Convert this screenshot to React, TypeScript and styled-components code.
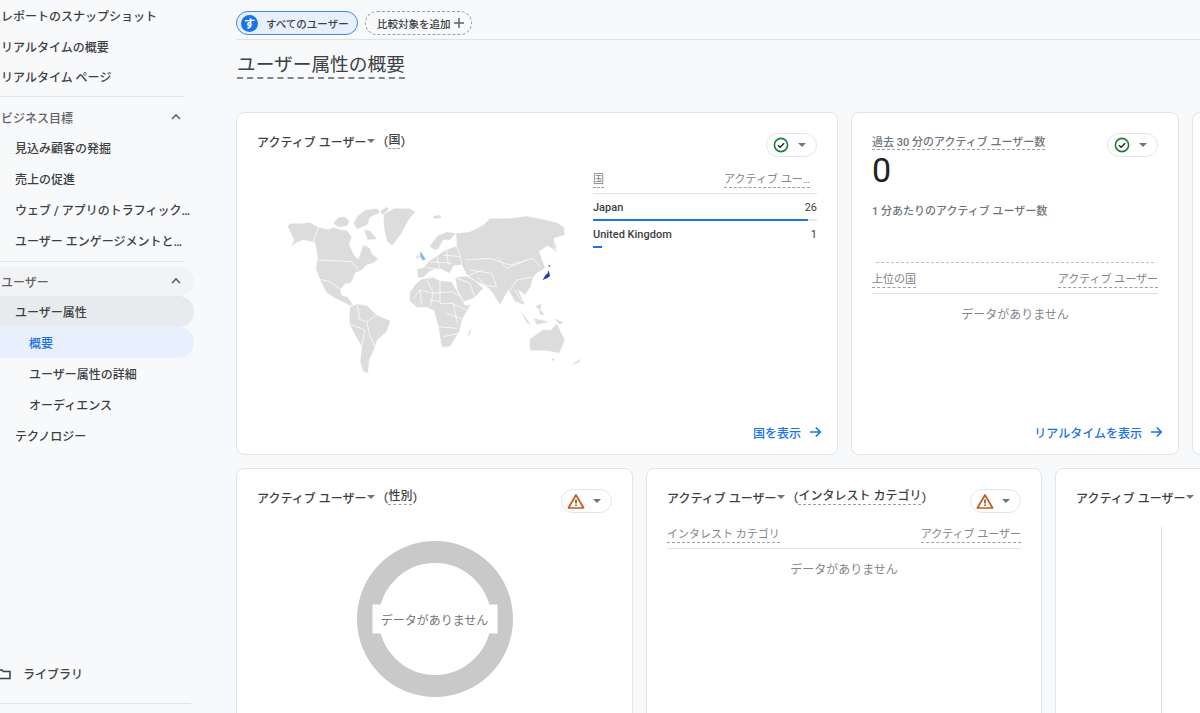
import React from "react";
import styled, { createGlobalStyle } from "styled-components";

const Global = createGlobalStyle`
  html, body { margin: 0; padding: 0; background: #f8f9fa; }
  body { font-family: Roboto, "Noto Sans CJK JP", sans-serif; color: #3c4043; overflow: hidden; }
  * { box-sizing: border-box; }
`;

const Page = styled.div`
  display: flex;
  width: 1200px;
  height: 713px;
  overflow: hidden;
  background: #f8f9fa;
`;

const Sidebar = styled.nav`
  flex: 0 0 194px;
  width: 194px;
  min-width: 0;
  display: flex;
  flex-direction: column;
  height: 713px;
  margin-right: 42px;
  overflow: hidden;
  font-size: 12px;
  font-weight: 500;
`;

const NavRow = styled.div<{ $indent?: number; $bg?: string; $color?: string }>`
  display: flex;
  align-items: center;
  justify-content: space-between;
  flex: 0 0 auto;
  height: 30.8px;
  min-width: 0;
  padding: 0 4px 0 ${(p) => p.$indent ?? 1}px;
  border-radius: 0 16px 16px 0;
  background: ${(p) => p.$bg ?? "transparent"};
  color: ${(p) => p.$color ?? "#3c4043"};
  white-space: nowrap;
`;

const ChevronBox = styled.span`
  display: flex;
  margin-right: 8px;
`;

const NavDivider = styled.div<{ $w: number; $top: number; $bottom: number }>`
  flex: 0 0 1px;
  width: ${(p) => p.$w}px;
  margin: ${(p) => p.$top}px 0 ${(p) => p.$bottom}px;
  background: #e3e4e6;
`;

const LibraryRow = styled.div`
  display: flex;
  align-items: center;
  gap: 12px;
  margin-top: auto;
  height: 31px;
  margin-left: -3px;
`;

const Main = styled.main`
  flex: 1;
  min-width: 0;
  height: 713px;
  overflow: hidden;
`;

const ChipBar = styled.div`
  display: flex;
  align-items: flex-start;
  gap: 7px;
  height: 40px;
  padding-top: 11px;
  border-bottom: 1px solid #dfe1e5;
`;

const SegmentChip = styled.div`
  display: flex;
  align-items: center;
  width: 122px;
  height: 24px;
  padding-left: 4px;
  border: 1px solid #4285f4;
  border-radius: 12px;
  background: #e8f0fe;
  font-size: 10.5px;
  font-weight: 500;
`;

const Avatar = styled.span`
  display: flex;
  align-items: center;
  justify-content: center;
  width: 17px;
  height: 17px;
  margin-right: 8px;
  border-radius: 50%;
  background: #1a73e8;
  color: #fff;
  font-size: 11px;
  font-weight: 700;
`;

const AddChip = styled.div`
  display: flex;
  align-items: center;
  justify-content: space-between;
  width: 107px;
  height: 24px;
  padding: 0 6px 0 11px;
  border: 1px dashed #9aa0a6;
  border-radius: 12px;
  font-size: 10.5px;
  font-weight: 500;
`;

const PageTitle = styled.h1`
  display: inline-block;
  margin: 14px 0 33px 1px;
  height: 25px;
  font-size: 18.7px;
  line-height: 23px;
  font-weight: 400;
  color: #3c4043;
  border-bottom: 2px dashed #80868b;
  white-space: nowrap;
`;

const CardRow = styled.div<{ $h: number }>`
  display: flex;
  gap: 13px;
  height: ${(p) => p.$h}px;
  margin-bottom: 13px;
`;

const Card = styled.section<{ $w: number }>`
  position: relative;
  flex: 0 0 ${(p) => p.$w}px;
  display: flex;
  flex-direction: column;
  height: 100%;
  padding: 20px 20px 13px;
  border: 1px solid #e2e4e7;
  border-radius: 8px;
  background: #fff;
`;

const CardHead = styled.div`
  display: flex;
  justify-content: space-between;
  align-items: flex-start;
  height: 24px;
`;

const CardTitle = styled.div`
  display: flex;
  align-items: center;
  height: 18px;
  margin-top: -1px;
  font-size: 12px;
  font-weight: 500;
  color: #3c4043;
  white-space: nowrap;
`;

const Dotted = styled.span`
  border-bottom: 1px dashed #9aa0a6;
  line-height: 15px;
`;

const ClippedHeader = styled(Dotted)`
  margin-right: 7px;
`;

const Caret = styled.span`
  display: inline-block;
  width: 0;
  height: 0;
  margin: 0 1px;
  border-left: 4px solid transparent;
  border-right: 4px solid transparent;
  border-top: 4px solid #70757a;
`;

const StatusPill = styled.div`
  display: flex;
  align-items: center;
  justify-content: space-between;
  flex: 0 0 auto;
  width: 51px;
  height: 24px;
  padding: 0 9px 0 5px;
  border: 1px solid #e3e5e8;
  border-radius: 12px;
  background: #fff;
`;

const CardBody = styled.div`
  display: flex;
  flex: 1;
`;

const MapBox = styled.div`
  flex: 0 0 320px;
  height: 200px;
  margin: 33px 3px 0 13px;
`;

const Table = styled.div<{ $top?: number }>`
  flex: 1;
  min-width: 0;
  margin-top: ${(p) => p.$top ?? 15}px;
`;

const TableHead = styled.div`
  display: flex;
  justify-content: space-between;
  align-items: flex-end;
  height: 22px;
  padding-bottom: 5px;
  border-bottom: 1px solid #dfe1e5;
  font-size: 11px;
  color: #80868b;
  white-space: nowrap;
`;

const TableRow = styled.div`
  display: flex;
  justify-content: space-between;
  align-items: center;
  height: 25px;
  padding-top: 1px;
  font-family: Roboto, sans-serif;
  font-size: 11px;
  font-weight: 500;
  color: #3c4043;
`;

const RowValue = styled.span`
  font-weight: 400;
`;

const BarTrack = styled.div<{ $line?: boolean }>`
  height: 2px;
  background: ${(p) => (p.$line ? "#e8eaed" : "transparent")};
`;

const BarFill = styled.div`
  height: 2px;
  background: #1a73e8;
`;

const Empty = styled.div`
  margin-top: 12px;
  text-align: center;
  font-size: 12px;
  line-height: 18px;
  color: #80868b;
`;

const FooterLink = styled.div`
  display: flex;
  justify-content: flex-end;
  align-items: center;
  gap: 8px;
  height: 18px;
  margin: auto -5px 0 0;
  color: #1a73e8;
  font-size: 12px;
  font-weight: 500;
`;

const MetricHead = styled.div`
  margin-top: -2px;
`;

const MetricLabel = styled.span`
  color: #70757a;
  font-size: 11px;
  font-weight: 500;
  line-height: 15px;
  border-bottom: 1px dashed #9aa0a6;
  white-space: nowrap;
`;

const BigNumber = styled.div`
  height: 38px;
  margin-top: -6px;
  font-size: 34px;
  line-height: 38px;
  color: #202124;
`;

const SubLabel = styled.div`
  margin-top: 15px;
  font-size: 11px;
  font-weight: 500;
  line-height: 16px;
  color: #70757a;
`;

const SparkLine = styled.div`
  height: 1px;
  margin: 42px 4px 9px;
  border-top: 1px dashed #bdc1c6;
`;

const DonutWrap = styled.div`
  position: relative;
  width: 156px;
  height: 156px;
  margin: 28px auto 0;
  border: 22px solid #c9c9c9;
  border-radius: 50%;
`;

const DonutLabel = styled.div`
  position: absolute;
  left: 50%;
  top: 50%;
  transform: translate(-50%, -50%);
  width: 125px;
  height: 29px;
  display: flex;
  align-items: center;
  justify-content: center;
  background: #fff;
  color: #757575;
  font-size: 12px;
  white-space: nowrap;
`;

const AxisLine = styled.div`
  width: 1px;
  height: 200px;
  margin: 14px 0 0 85px;
  background: #dadce0;
`;

const Chevron = () => (
  <ChevronBox>
    <svg width="12" height="12" viewBox="0 0 12 12" fill="none" stroke="#5f6368" strokeWidth="1.6">
      <path d="M2 8l4-4 4 4" />
    </svg>
  </ChevronBox>
);

const Check = () => (
  <svg width="18" height="18" viewBox="0 0 18 18" fill="none" stroke="#188038" strokeWidth="1.6">
    <circle cx="9" cy="9" r="6.6" />
    <path d="M6 9.2l2.1 2.1 4-4.1" stroke="#202124" strokeWidth="1.3" />
  </svg>
);

const Warn = () => (
  <svg width="18" height="17" viewBox="0 0 18 17" fill="none">
    <path d="M9 2L16.6 15H1.4z" stroke="#c5591b" strokeWidth="1.7" strokeLinejoin="round" />
    <path d="M9 6.6v3.8M9 11.4v1.5" stroke="#5f3a22" strokeWidth="1.4" />
  </svg>
);

const Arrow = () => (
  <svg width="13" height="12" viewBox="0 0 13 12" fill="none" stroke="#1a73e8" strokeWidth="1.6">
    <path d="M1 6h10M6.8 1.5L11.3 6l-4.5 4.5" />
  </svg>
);

const Plus = () => (
  <svg width="12" height="12" viewBox="0 0 12 12" stroke="#5f6368" strokeWidth="1.5">
    <path d="M6 1v10M1 6h10" />
  </svg>
);

const Folder = () => (
  <svg width="14" height="12" viewBox="0 0 14 12" fill="none" stroke="#3c4043" strokeWidth="1.5">
    <path d="M1 2h4l1.4 1.5H13V10.5H1z" />
  </svg>
);

const land = [
  "52,108 62,100 100,100 118,96 146,112 175,118 190,112 210,118 232,122 245,140 238,165 255,200 265,206 280,165 300,175 305,190 325,208 312,218 290,225 275,240 255,250 248,270 240,280 225,282 212,298 215,315 232,320 250,345 240,348 225,340 195,325 172,310 165,300 150,270 137,235 143,205 135,158 100,150 80,158 62,170 72,150",
  "190,100 205,82 225,80 238,92 232,108 205,112",
  "250,100 262,78 285,60 322,55 330,68 300,82 292,105 262,118",
  "330,62 350,50 358,56 338,76",
  "282,118 300,122 322,148 292,150",
  "342,72 372,55 420,55 436,66 418,88 408,105 395,130 366,168 350,152 344,125 340,100",
  "488,78 512,74 514,84 494,88",
  "240,350 262,342 290,346 320,375 362,392 350,425 322,450 315,472 298,510 294,550 280,545 270,515 275,470 252,430 238,402 238,372",
  "420,305 435,285 452,268 490,262 510,272 545,275 570,318 585,345 602,345 578,385 568,425 540,470 515,472 505,410 492,362 470,352 440,352 418,332",
  "590,442 604,410 602,432",
  "440,238 462,232 478,212 500,198 530,178 560,168 572,200 575,225 550,228 540,250 515,240 495,238 478,245 460,262 444,264",
  "478,168 505,135 532,125 558,130 540,150 520,150 505,178 492,180",
  "558,130 600,125 640,105 660,85 720,85 770,78 830,90 862,98 882,112 885,135 852,145 862,188 845,175 832,168 808,185 826,235 800,250 790,262 782,290 765,315 745,300 765,345 735,335 715,300 690,345 665,305 640,285 615,272 590,255 575,225 572,200 560,168",
  "555,262 590,258 615,272 640,295 612,325 580,335 562,300",
  "745,355 785,405 770,398",
  "790,385 840,395 800,405",
  "805,350 825,375 810,375",
  "850,385 880,395 870,405",
  "795,350 815,340 812,360",
  "778,448 820,418 842,420 860,400 885,450 868,490 830,482 780,482",
  "842,505 855,505 850,515",
  "900,525 935,505 925,520",
  "852,150 860,170 855,185",
];

const borders = [
  "146,112 130,155",
  "143,210 195,212 245,215 265,240",
  "150,268 180,275 212,298",
  "262,385 290,395 300,440 315,470",
  "240,402 285,420 275,470",
  "262,346 270,385",
  "320,375 290,395",
  "430,325 450,300 490,310 545,305 570,318",
  "470,270 490,310 480,350",
  "510,265 510,340 550,340 562,400",
  "450,300 455,345",
  "480,330 510,335",
  "505,410 560,415",
  "520,440 565,430",
  "545,340 590,360",
  "530,370 575,385",
  "470,232 520,240",
  "500,198 510,238",
  "520,195 570,200",
  "480,215 545,220",
  "530,178 535,225",
  "585,210 660,205 720,225 790,205 810,230",
  "680,200 710,235 770,210",
  "600,240 665,250 680,290",
  "620,260 660,300",
  "720,300 740,270 785,262",
  "735,300 755,335",
  "590,258 640,240",
  "640,285 680,290",
  "555,262 600,280 615,325",
];

const WorldMap = () => (
  <svg width="320" height="200" viewBox="0 0 960 600">
    {land.map((p) => (
      <polygon key={p} points={p} fill="#dcdcdc" stroke="#fff" strokeWidth="1.5" />
    ))}
    {borders.map((p) => (
      <polyline key={p} points={p} fill="none" stroke="#fff" strokeWidth="2.2" />
    ))}
    <polygon points="450,184 456,190 468,208 458,212 450,200" fill="#8ab4f8" stroke="#fff" strokeWidth="1" />
    <polygon points="440,196 447,198 445,206 438,204" fill="#dcdcdc" />
    <polygon points="836,240 840,258 832,264 818,270 826,256 833,250" fill="#1a3fa8" />
    <polygon points="834,224 842,228 838,232" fill="#2f5fd0" />
  </svg>
);

export default function App() {
  return (
    <Page>
      <Global />
      <Sidebar>
        <NavRow>レポートのスナップショット</NavRow>
        <NavRow>リアルタイムの概要</NavRow>
        <NavRow>リアルタイム ページ</NavRow>
        <NavDivider $w={184} $top={4} $bottom={4.3} />
        <NavRow $color="#5f6368">
          <span>ビジネス目標</span>
          <Chevron />
        </NavRow>
        <NavRow $indent={15}>見込み顧客の発掘</NavRow>
        <NavRow $indent={15}>売上の促進</NavRow>
        <NavRow $indent={15}>ウェブ / アプリのトラフィック…</NavRow>
        <NavRow $indent={15}>ユーザー エンゲージメントと…</NavRow>
        <NavDivider $w={184} $top={5} $bottom={4} />
        <NavRow $color="#5f6368" $bg="#f1f3f4">
          <span>ユーザー</span>
          <Chevron />
        </NavRow>
        <NavRow $indent={15} $bg="#e8eaed">ユーザー属性</NavRow>
        <NavRow $indent={29} $bg="#e8f0fe" $color="#1a73e8">概要</NavRow>
        <NavRow $indent={29}>ユーザー属性の詳細</NavRow>
        <NavRow $indent={29}>オーディエンス</NavRow>
        <NavRow $indent={15}>テクノロジー</NavRow>
        <LibraryRow>
          <Folder />
          <span>ライブラリ</span>
        </LibraryRow>
        <NavDivider $w={191} $top={14} $bottom={9} />
      </Sidebar>
      <Main>
        <ChipBar>
          <SegmentChip>
            <Avatar>す</Avatar>
            すべてのユーザー
          </SegmentChip>
          <AddChip>
            比較対象を追加
            <Plus />
          </AddChip>
        </ChipBar>
        <PageTitle>ユーザー属性の概要</PageTitle>
        <CardRow $h={343}>
          <Card $w={602}>
            <CardHead>
              <CardTitle>
                アクティブ ユーザー<Caret />（<Dotted>国</Dotted>）
              </CardTitle>
              <StatusPill>
                <Check />
                <Caret />
              </StatusPill>
            </CardHead>
            <CardBody>
              <MapBox>
                <WorldMap />
              </MapBox>
              <Table>
                <TableHead>
                  <Dotted>国</Dotted>
                  <ClippedHeader>アクティブ ユー…</ClippedHeader>
                </TableHead>
                <TableRow>
                  <span>Japan</span>
                  <RowValue>26</RowValue>
                </TableRow>
                <BarTrack $line>
                  <BarFill style={{ width: "96%" }} />
                </BarTrack>
                <TableRow>
                  <span>United Kingdom</span>
                  <RowValue>1</RowValue>
                </TableRow>
                <BarTrack>
                  <BarFill style={{ width: "4%" }} />
                </BarTrack>
              </Table>
            </CardBody>
            <FooterLink>
              国を表示
              <Arrow />
            </FooterLink>
          </Card>
          <Card $w={328}>
            <CardHead>
              <MetricHead>
                <MetricLabel>過去 30 分のアクティブ ユーザー数</MetricLabel>
              </MetricHead>
              <StatusPill>
                <Check />
                <Caret />
              </StatusPill>
            </CardHead>
            <BigNumber>0</BigNumber>
            <SubLabel>1 分あたりのアクティブ ユーザー数</SubLabel>
            <SparkLine />
            <TableHead>
              <Dotted>上位の国</Dotted>
              <Dotted>アクティブ ユーザー</Dotted>
            </TableHead>
            <Empty>データがありません</Empty>
            <FooterLink>
              リアルタイムを表示
              <Arrow />
            </FooterLink>
          </Card>
          <Card $w={200} />
        </CardRow>
        <CardRow $h={300}>
          <Card $w={397}>
            <CardHead>
              <CardTitle>
                アクティブ ユーザー<Caret />（<Dotted>性別</Dotted>）
              </CardTitle>
              <StatusPill>
                <Warn />
                <Caret />
              </StatusPill>
            </CardHead>
            <DonutWrap>
              <DonutLabel>データがありません</DonutLabel>
            </DonutWrap>
          </Card>
          <Card $w={396}>
            <CardHead>
              <CardTitle>
                アクティブ ユーザー<Caret />（<Dotted>インタレスト カテゴリ</Dotted>）
              </CardTitle>
              <StatusPill>
                <Warn />
                <Caret />
              </StatusPill>
            </CardHead>
            <Table $top={14}>
              <TableHead>
                <Dotted>インタレスト カテゴリ</Dotted>
                <Dotted>アクティブ ユーザー</Dotted>
              </TableHead>
              <Empty>データがありません</Empty>
            </Table>
          </Card>
          <Card $w={300}>
            <CardHead>
              <CardTitle>
                アクティブ ユーザー<Caret />
              </CardTitle>
            </CardHead>
            <AxisLine />
          </Card>
        </CardRow>
      </Main>
    </Page>
  );
}
